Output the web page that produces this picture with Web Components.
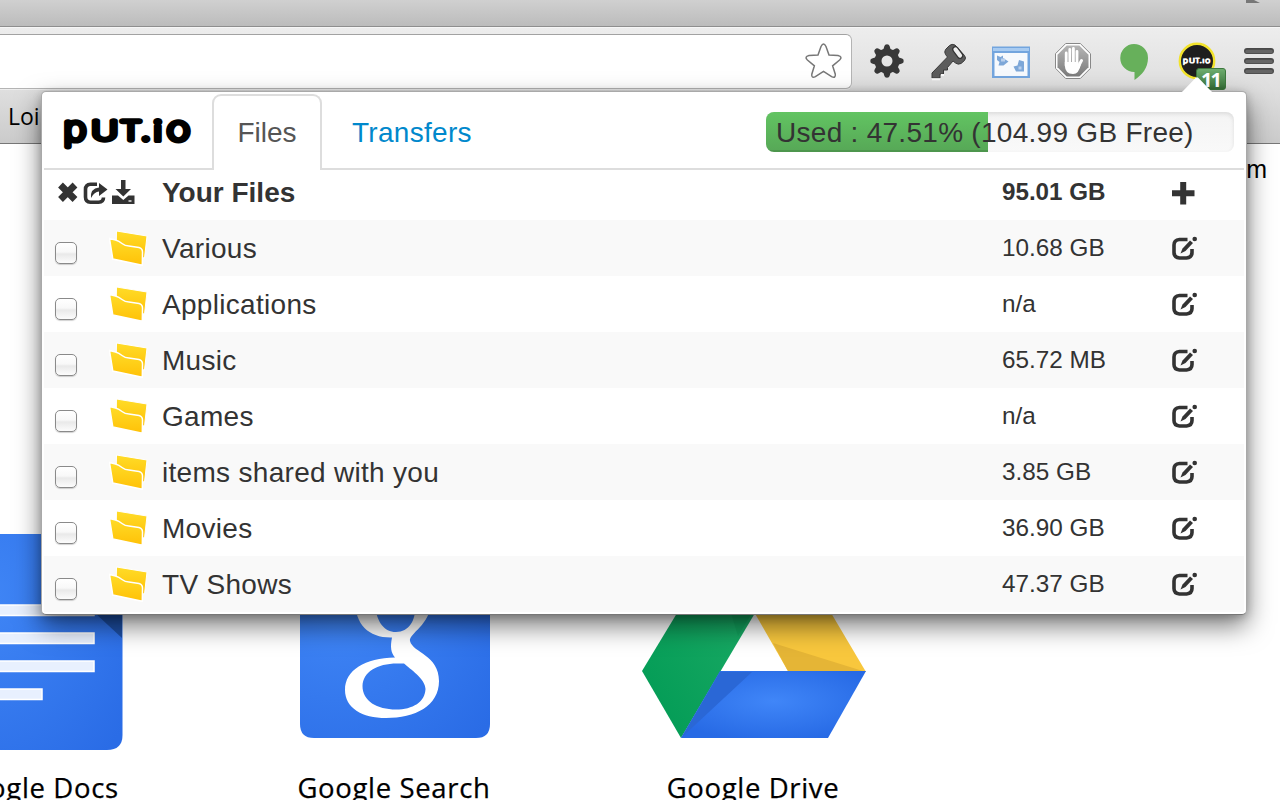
<!DOCTYPE html>
<html lang="en">
<head>
<meta charset="utf-8">
<title>put.io</title>
<style>
html,body{margin:0;height:100%;overflow:hidden;background:#fff}
body{font-family:"Liberation Sans",Arial,sans-serif;color:#333}
</style>
</head>
<body>
<browser-window>
  <tool-bar slot="chrome"></tool-bar>
  <bookmark-bar slot="chrome">Loi</bookmark-bar>
  <new-tab-page slot="page">
    <app-tile kind="docs">Google Docs</app-tile>
    <app-tile kind="search">Google Search</app-tile>
    <app-tile kind="drive">Google Drive</app-tile>
  </new-tab-page>
  <extension-popup slot="popup">
    <popup-header slot="header"></popup-header>
    <file-header size="95.01 GB">Your Files</file-header>
    <file-row size="10.68 GB" odd>Various</file-row>
    <file-row size="n/a">Applications</file-row>
    <file-row size="65.72 MB" odd>Music</file-row>
    <file-row size="n/a">Games</file-row>
    <file-row size="3.85 GB" odd>items shared with you</file-row>
    <file-row size="36.90 GB">Movies</file-row>
    <file-row size="47.37 GB" odd>TV Shows</file-row>
  </extension-popup>
</browser-window>
<script>
const define = (name, html) => customElements.define(name, class extends HTMLElement {
  constructor() {
    super();
    this.attachShadow({mode: 'open'}).innerHTML = typeof html === 'function' ? html(this) : html;
  }
});

define('browser-window', `
<style>
:host{display:flex;flex-direction:column;position:relative;width:1280px;height:800px;overflow:hidden}
.title{box-sizing:border-box;height:27px;flex:none;background:linear-gradient(#d0d0d0,#bcbcbc);border-bottom:1px solid #8e8e8e}
.title svg{display:block;margin-left:1240px}
.bars{flex:none;height:117px;box-sizing:border-box;background:linear-gradient(#ededed,#dedede 55%,#cbcbcb);border-bottom:1px solid #777;border-top:1px solid #f6f6f6}
.page{flex:1;min-height:0}
.pop{position:absolute;left:41px;top:91px}
</style>
<div class="title"><svg width="40" height="4"><path d="M6 0H14L20 3H6Z" fill="#777"/></svg></div>
<div class="bars"><slot name="chrome"></slot></div>
<div class="page"><slot name="page"></slot></div>
<div class="pop"><slot name="popup"></slot></div>`);

const gearTeeth = [0,45,90,135,180,225,270,315].map(a =>
  `<path d="M882.6 52 L884.4 46 Q884.8 44.3 887 44.3 Q889.2 44.3 889.6 46 L891.4 52Z" transform="rotate(${a} 887 61)"/>`).join('');

/* Wordmark: each letter is hairline text, widened and thickened with a round stroke. */
const letter = (ch, x, y, size, sx, sw, font = 'Inter') =>
  `<text x="${x / sx}" y="${y}" transform="scale(${sx} 1)" font-family="${font},sans-serif" font-weight="${font === 'Inter' ? 100 : 400}" font-size="${size}" stroke-width="${sw}">${ch}</text>`;
const wordmark = (fill) => `
<g fill="${fill}" stroke="${fill}" stroke-linejoin="round" stroke-linecap="round">
${letter('p', 63.8, 140.2, 31.5, 1.22, 5.6)}${letter('U', 92, 140.2, 25, 1.42, 5.4)}${letter('T', 120.6, 140.2, 25, 1.35, 5.4)}${letter('.', 141.4, 141, 30, 1.2, 4, 'Lato')}${letter('i', 153.8, 140.9, 28, 1.2, 4.2, 'Lato')}${letter('o', 167, 140.2, 31.5, 1.25, 5.6)}</g>`;

define('tool-bar', `
<style>
:host{display:flex;height:64px}
.url{box-sizing:border-box;width:862px;height:55px;margin:6px 0 0 -10px;flex:none;background:#fff;border:1px solid #b4b4b4;border-top-color:#a2a2a2;border-radius:6px;display:flex;justify-content:flex-end;box-shadow:0 1px 0 #eee}
.icons{display:flex;margin-left:4px}
svg{display:block;flex:none}
</style>
<div class="url"><svg width="52" height="53" viewBox="799 35 52 53"><path d="M821 46.500Q823.500 41.500 826 46.500L829 55L838 55.600Q843 56.800 839.600 60L832.600 65.800L835.300 74.200Q835.800 78.600 831.600 76.600L823.500 71.400L815.400 76.600Q811.200 78.600 811.800 74.200L814.400 65.800L807.400 60Q804 56.800 809 55.600L818 55Z" fill="#fff" stroke="#777" stroke-width="1.500"/></svg></div>
<div class="icons">
<svg width="62" height="64" viewBox="856 28 62 64"><g fill="#383838">${gearTeeth}</g><circle cx="887" cy="61" r="9" fill="none" stroke="#383838" stroke-width="7"/></svg>
<svg width="62" height="64" viewBox="918 28 62 64"><path d="M932 73L947.500 57L945.500 54.500Q944 52 945.500 49.500L949.500 45.500Q952 43.500 955 45L964.500 55.500Q966.500 58 964.500 60.500L961 63.500Q958 65 955.500 63L953 61L947.500 67.500V70H943.500V74H940V78H932Z" fill="#5c5c5c" stroke="#3a3a3a"/><path d="M955.500 49.500L960 55.500" stroke="#333" stroke-width="6.600" stroke-linecap="round"/><path d="M955.500 49.500L960 55.500" stroke="#eee" stroke-width="4.200" stroke-linecap="round"/><path d="M932 79.300H940M941 75H944" stroke="#fafafa" stroke-width="2"/></svg>
<svg width="62" height="64" viewBox="980 28 62 64"><rect x="992" y="46.500" width="38" height="31.500" fill="#73a5de"/><rect x="993" y="48" width="36" height="3" fill="#a8cbf1"/><rect x="994.500" y="53" width="33" height="23" fill="#f6f9fd"/><g fill="#7da7d8"><path d="M997 55.500L1000.500 57L1003 55.500V58L1008.500 61.500L1003.500 65.500H998.500L999.500 62L997 60Z"/><path d="M1019 60L1024 61.500V71.500H1016L1013.500 66.500L1017.500 65.500Z"/></g><path d="M1001 60H1005M1018.500 68H1021.500" stroke="#b9d0ed" stroke-width="3"/></svg>
<svg width="62" height="64" viewBox="1042 28 62 64"><defs><linearGradient id="h" x2="0" y2="1"><stop stop-color="#b5b5b5"/><stop offset="1" stop-color="#7b7b7b"/></linearGradient></defs><path d="M1065.700 43.500H1080.300L1090.500 53.700V68.300L1080.300 78.500H1065.700L1055.500 68.300V53.700Z" fill="#fff" stroke="#888"/><path d="M1066.700 45.500H1079.300L1088.500 54.700V67.300L1079.300 76.500H1066.700L1057.500 67.300V54.700Z" fill="url(#h)"/><g stroke="#fff" stroke-linecap="round" stroke-width="2.800" fill="none"><path d="M1066.200 53V66M1069.800 49.300V65M1073.400 48.300V65M1077 51.500V66"/><path d="M1081.500 60.500L1077.500 68" stroke-width="3"/></g><path d="M1064.800 62H1078.400V67L1081 64Q1079 74 1073 74Q1065 74 1064.800 65Z" fill="#fff"/></svg>
<svg width="62" height="64" viewBox="1104 28 62 64"><path d="M1134 44A14 14 0 0 1 1148 58C1148 68 1142 75 1134.500 80V72A14 14 0 0 1 1134 44Z" fill="#67b05b"/></svg>
<svg width="62" height="64" viewBox="1166 28 62 64"><defs><linearGradient id="b" x2="0" y2="1"><stop stop-color="#6fae70"/><stop offset="1" stop-color="#356f37"/></linearGradient></defs><circle cx="1197" cy="61" r="17.200" fill="#1e1e1e" stroke="#f2e32c" stroke-width="2.400"/><g transform="translate(1169.400 30.300) scale(.215 .23)">${wordmark('#fff')}</g><rect x="1196.500" y="68.500" width="29" height="21" rx="2.500" fill="url(#b)" stroke="#3d783e"/><text x="1201" y="86.500" font-family="Open Sans" font-weight="700" font-size="20" textLength="21" fill="#fff">11</text></svg>
<svg width="52" height="64" viewBox="1228 28 52 64"><path d="M1247 51H1271M1247 61H1271M1247 71H1271" stroke="#494949" stroke-width="6" stroke-linecap="round"/><path d="M1247 51.500H1271M1247 61.500H1271M1247 71.500H1271" stroke="#656565" stroke-width="3.500" stroke-linecap="round"/></svg>
</div>`);

define('bookmark-bar', `
<style>:host{display:flex;align-items:center;height:48px;padding-left:8px;color:#000;font:500 23px/1 "Open Sans","Noto Sans",sans-serif}</style>
<slot></slot>`);

define('new-tab-page', `
<style>
:host{display:flex;flex-direction:column;height:656px;justify-content:space-between;color:#000}
.top{display:flex;justify-content:flex-end;padding:11px 13px 0 0;font-size:25px;line-height:29px}
.tiles{display:grid;grid-template-columns:repeat(3,359px);margin-left:-143.5px;height:300px}
</style>
<div class="top">m</div><div class="tiles"><slot></slot></div>`);

const blue = id => `<defs><radialGradient id="${id}" cx=".2" cy=".3" r="1"><stop stop-color="#4086f6"/><stop offset="1" stop-color="#2a6ce6"/></radialGradient></defs>`;
const art = {
docs: ['-84', blue('a') + `<path d="M-50 534H122.500V735Q122.500 750 107 750H-50Z" fill="url(#a)"/><path d="M95 613L122 638V613Z" fill="#1d4fa5"/><g fill="#e8f0fe" stroke="#fff" stroke-width="1.500"><path d="M-20 605H94V615.500H-20ZM-20 633H94V643.500H-20ZM-20 661H94V671.500H-20ZM-20 689H42V699.500H-20Z"/></g>`],
search: ['275', blue('a') + `<path d="M300 548H490V724Q490 738 476 738H314Q300 738 300 724Z" fill="url(#a)"/>
<path fill-rule="evenodd" fill="#fff" d="M355 600C355 625 369 638 392 637.500C390 647 391 653 395 657.500C365 658 345 670 345 690C345 708 362 718 386 718C415 718 439 706 439 681C439 655 413 653 410 641C409 633 430 626 432 600ZM375 606C377 622 384 632 396 632C409 632 416 620 415 606ZM397 663.500H404C410 669 425.500 679 425.500 689C425 702 413 709.500 396 709.500C377 709.500 362.500 701 362.500 686C363 672 377 663.500 397 663.500Z"/>`],
drive: ['634', `<defs><radialGradient id="a" cx=".5" cy=".45" r=".6"><stop stop-color="#4086f8"/><stop offset="1" stop-color="#276ae5"/></radialGradient><linearGradient id="g" x2="1" y1="1" y2="0"><stop stop-color="#009a54"/><stop offset="1" stop-color="#20ad68"/></linearGradient></defs><path d="M717 547L755 613L681 738L642 671Z" fill="url(#g)"/><path d="M717 547H792L866 672H788.500Z" fill="#f8c73d"/><path d="M773 643L866 672H788.500Z" fill="#e5b536"/><path d="M720 671H866L828 738H681Z" fill="url(#a)"/><path d="M720 672H752L681 738Z" fill="#2a67d6"/><path d="M731 613L738 636L752 613Z" fill="#12a05c"/>`]
};
define('app-tile', el => { const [x, body] = art[el.getAttribute('kind')]; return `
<style>
:host{display:flex;flex-direction:column;align-items:center;white-space:nowrap;font:500 27.5px/30px "Open Sans","Noto Sans",sans-serif;letter-spacing:.65px;-webkit-text-stroke:.25px #000}
svg{display:block;height:270px;flex:none}
.l{height:30px;position:relative;top:3px;left:-1px}
</style><svg width="240" height="270" viewBox="${x} 500 240 270">${body}</svg><div class="l"><slot></slot></div>`; });

define('extension-popup', `
<style>
:host{display:block;position:relative;box-sizing:border-box;width:1206px;height:524px;background:#fff;border:1px solid #a9a9a9;border-bottom-color:#777;border-radius:5px;padding:2px;box-shadow:0 11px 26px 0 rgba(0,0,0,.52),0 2px 8px rgba(0,0,0,.2)}
.arrow{position:absolute;left:1138px;top:-17px}
</style>
<svg class="arrow" width="36" height="19" viewBox="1180 75 36 19"><path d="M1180 94V92.500Q1182 92 1183 91L1195.500 78Q1197 76.500 1198.500 78L1211 91Q1212 92 1214 92.500V94Z" fill="#fff"/></svg>
<slot name="header"></slot><slot></slot>`);

define('popup-header', `
<style>
:host{display:flex;align-items:flex-end;height:76px;font-size:28px;background:linear-gradient(#ddd,#ddd) 0 100%/100% 2px no-repeat}
svg{display:block;flex:none;width:168px;height:74px}
.tab{box-sizing:border-box;width:110px;height:76px;border:2px solid #ddd;border-bottom:0;border-radius:9px 9px 0 0;background:#fff;color:#555;line-height:73px;text-align:center}
.link{color:#08c;line-height:75px;margin-left:30px;letter-spacing:.3px}
.bar{width:468px;height:40px;margin:0 10px 18px auto;border-radius:8px;background:linear-gradient(#f4f4f4,#f9f9f9);box-shadow:inset 0 2px 4px rgba(0,0,0,.1);overflow:hidden}
.t{box-sizing:border-box;height:40px;padding-left:10px;line-height:42px;white-space:nowrap;background:linear-gradient(#62c462,#57a957 94%,#4d964d 95%) 0 0/222px 100% no-repeat;letter-spacing:.28px}
</style>
<svg viewBox="44 96 168 74">${wordmark('#000')}</svg>
<div class="tab">Files</div><div class="link">Transfers</div>
<div class="bar"><div class="t">Used : 47.51% (104.99 GB Free)</div></div>`);

const grid = `display:grid;grid-template-columns:118px 840px 170px 1fr;align-items:center;box-sizing:border-box;font-size:28px;line-height:32px`;
define('file-header', el => `
<style>
:host{${grid};height:50px;padding-bottom:6px;font-weight:bold}
svg{display:block}.n{margin-top:1px}.s{font-size:24.2px;margin-top:-1px}
</style>
<svg width="118" height="44" viewBox="44 170 118 44"><path d="M60.500 185L75 199.500M75 185L60.500 199.500" stroke="#333" stroke-width="6.800"/><path d="M97 184.300H90.500Q85.500 184.500 85.500 189.500V197Q85.500 202 90.500 202.300H98.500Q103.500 202 103.500 197.500" fill="none" stroke="#333" stroke-width="3.600"/><path d="M91 198Q90 188.500 99 187.500V183L107.500 189.500L99 196V191.500Q94.500 191.500 91 198Z" fill="#333"/><path d="M121 180H125.500V189H131L123.300 196.500L115.500 189H121ZM112 195.500H118L123.300 200L128.500 195.500H134.500V204H112Z" fill="#333"/><path d="M128.500 201H131.500" stroke="#fff" stroke-width="1.300"/></svg>
<span class="n"><slot></slot></span><span class="s">${el.getAttribute('size')}</span>
<svg width="30" height="44" viewBox="1172 170 30 44"><path d="M1172 193.300H1194.500M1183.200 182V204.500" stroke="#333" stroke-width="6"/></svg>`);

define('file-row', el => `
<style>
:host{${grid};height:56px;background:${el.hasAttribute('odd') ? '#f9f9f9' : '#fff'}}
svg{display:block}.n{letter-spacing:.3px;margin-top:2px}.s{font-size:24.3px;margin-top:-1px}
.lead{display:flex}
.box{box-sizing:border-box;width:22px;height:22px;margin:13px 32px 0 11px;border:1.500px solid #8a8a8a;border-radius:5px;background:linear-gradient(#fff,#f8f8f8 45%,#e9e9e9 55%,#fcfcfc);box-shadow:0 1px 1px rgba(0,0,0,.18)}
</style>
<div class="lead"><div class="box"></div>
<svg width="40" height="38" viewBox="109 229 40 38"><defs><linearGradient id="f" x2="0" y2="1"><stop stop-color="#ffdc28"/><stop offset="1" stop-color="#ffc107"/></linearGradient></defs><path d="M116.500 231L147 236L144.500 258L116 253Z" fill="url(#f)" stroke="#fff"/><path d="M109.500 238.500L115.500 240Q119 241 122 243.500T129 246L139 247.500Q142.500 248.500 142.500 252L142.300 265.300L112.800 259Z" fill="url(#f)" stroke="#fff" stroke-width="1.500"/></svg></div>
<span class="n"><slot></slot></span><span class="s">${el.getAttribute('size')}</span>
<svg width="30" height="44" viewBox="1172 226 30 44"><path d="M1187.500 239.500H1179.500Q1174 240 1174 245V252.500Q1174 257.500 1179.500 258H1186.500Q1192 257.500 1192 252.500V249" fill="none" stroke="#333" stroke-width="3.600"/><path d="M1180.500 253.500L1182.500 248.500L1190 240.500L1193 243L1185.500 251Z" fill="#333"/><circle cx="1194.700" cy="239" r="2.300" fill="#333"/></svg>`);
</script>
</body>
</html>
